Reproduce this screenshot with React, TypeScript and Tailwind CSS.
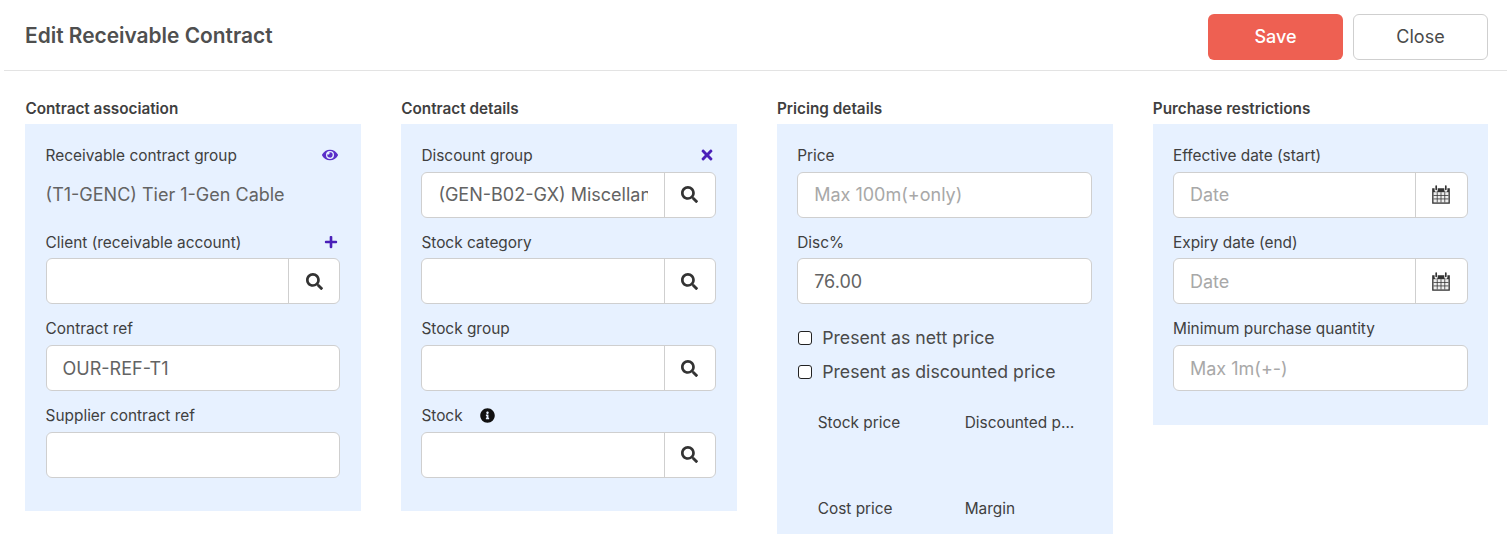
import React from "react";
import { FaEye, FaPlus, FaTimes, FaSearch, FaInfoCircle } from "react-icons/fa";

function CalendarIcon() {
  return (
    <svg width="18" height="19" viewBox="1 0.5 16 17.2" className="text-[#333]">
      <path fill="currentColor" d="M1 3.5h2.2V5.2a1.4 1.4 0 0 0 2.8 0V3.5h6V5.2a1.4 1.4 0 0 0 2.8 0V3.5H17v14H1z" />
      <rect x="3.9" y="0.8" width="1.5" height="4.4" rx="0.7" fill="currentColor" />
      <rect x="12.6" y="0.8" width="1.5" height="4.4" rx="0.7" fill="currentColor" />
      <path fill="#eee" d="M2.2 7h13.6v9.3H2.2z" />
      <path stroke="currentColor" strokeWidth="0.7" fill="none" d="M2.2 10h13.6M2.2 13.1h13.6M5.6 7v9.3M9 7v9.3M12.4 7v9.3" />
    </svg>
  );
}

function Label({ children, right }: { children: React.ReactNode; right?: React.ReactNode }) {
  return (
    <div className="flex h-[24px] items-center justify-between text-[15.4px] text-[#404040]">
      <span className="flex items-center">{children}</span>
      {right}
    </div>
  );
}

function Field({ label, right, children }: { label: React.ReactNode; right?: React.ReactNode; children: React.ReactNode }) {
  return (
    <div className="h-[86.67px]">
      <Label right={right}>{label}</Label>
      <div className="mt-[4px]">{children}</div>
    </div>
  );
}

function TextBox({ value, placeholder }: { value?: string; placeholder?: string }) {
  return (
    <div className="flex h-[46px] items-center rounded-md border border-[#cfcfcf] bg-white px-4 text-[18px]">
      {value ? <span className="text-[#636363]">{value}</span> : <span className="text-[#a8a8a8]">{placeholder}</span>}
    </div>
  );
}

function AddonBox({ value, placeholder, icon }: { value?: string; placeholder?: string; icon: React.ReactNode }) {
  return (
    <div className="flex h-[46px] rounded-md border border-[#cfcfcf] bg-white text-[18px]">
      <div className="flex min-w-0 flex-1 items-center overflow-hidden whitespace-nowrap pl-4 pr-4">
        {value && <span className="block w-full overflow-hidden text-[#636363]">{value}</span>}
        {placeholder && <span className="text-[#a8a8a8]">{placeholder}</span>}
      </div>
      <div className="flex w-[51.5px] shrink-0 items-center justify-center border-l border-[#cfcfcf]">{icon}</div>
    </div>
  );
}

const Search = <FaSearch className="text-[17px] text-[#333]" />;

function Column({ title, children, className }: { title: string; children: React.ReactNode; className: string }) {
  return (
    <section className="min-w-0">
      <h2 className="mb-[2px] flex h-[26px] items-center text-[15.3px] font-semibold text-[#3f3f3f]">{title}</h2>
      <div className={"bg-[#e7f1ff] pl-[20.2px] pr-[20.6px] pt-[19.7px] " + className}>{children}</div>
    </section>
  );
}

function Check({ label }: { label: string }) {
  return (
    <label className="flex h-[34px] items-center text-[17.7px] text-[#4a4a4a]">
      <span className="ml-[0.5px] mr-[10.5px] h-[14px] w-[14px] rounded-[3px] border-[1.5px] border-[#222] bg-white" />
      {label}
    </label>
  );
}

export default function App() {
  return (
    <div className="h-[534px] overflow-hidden bg-white font-['Inter',sans-serif]">
      <header className="ml-1 flex h-[71px] items-center justify-between border-b border-[#e3e3e3] pl-[21px] pr-[19px] pt-[4px]">
        <h1 className="-mt-[2px] text-[20.9px] font-semibold text-[#4f4f4f]">Edit Receivable Contract</h1>
        <div className="flex gap-[10px]">
          <button className="h-[46px] w-[135px] rounded-md bg-[#ee6052] pb-[2px] text-[18px] font-medium text-white">Save</button>
          <button className="h-[46px] w-[135px] rounded-md border border-[#cfcfcf] bg-white pb-[2px] text-[18px] text-[#4a4a4a]">Close</button>
        </div>
      </header>
      <main className="grid grid-cols-4 gap-x-[40.3px] pl-[25.4px] pr-[18.7px] pt-[25px]">
        <Column title="Contract association" className="h-[387px]">
          <Field label="Receivable contract group" right={<FaEye className="mr-[2px] -translate-y-px text-[16px] text-[#5b2fc9]" />}>
            <div className="flex h-[46px] items-center text-[18px] text-[#636363]">(T1-GENC) Tier 1-Gen Cable</div>
          </Field>
          <Field label="Client (receivable account)" right={<FaPlus className="mr-[2px] text-[14px] text-[#4a1fb8]" />}>
            <AddonBox icon={Search} />
          </Field>
          <Field label="Contract ref">
            <TextBox value="OUR-REF-T1" />
          </Field>
          <Field label="Supplier contract ref">
            <TextBox />
          </Field>
        </Column>
        <Column title="Contract details" className="h-[387px]">
          <Field label="Discount group" right={<FaTimes className="mr-[1.5px] -translate-y-px text-[16px] text-[#4a1fb8]" />}>
            <AddonBox value="(GEN-B02-GX) Miscellaneous" icon={Search} />
          </Field>
          <Field label="Stock category">
            <AddonBox icon={Search} />
          </Field>
          <Field label="Stock group">
            <AddonBox icon={Search} />
          </Field>
          <Field label={<>Stock<FaInfoCircle className="ml-[17px] text-[15px] text-[#111]" /></>}>
            <AddonBox icon={Search} />
          </Field>
        </Column>
        <Column title="Pricing details" className="h-[410px]">
          <Field label="Price">
            <TextBox placeholder="Max 100m(+only)" />
          </Field>
          <Field label="Disc%">
            <TextBox value="76.00" />
          </Field>
          <div className="mt-[4px]">
            <Check label="Present as nett price" />
            <Check label="Present as discounted price" />
          </div>
          <div className="mt-[22px] grid grid-cols-[147px_111px] pl-[20.5px] text-[15.4px] text-[#404040]">
            <div className="h-[86px] truncate">Stock price</div>
            <div className="h-[86px] truncate">Discounted price</div>
            <div className="truncate">Cost price</div>
            <div className="truncate">Margin</div>
          </div>
        </Column>
        <Column title="Purchase restrictions" className="h-[301px]">
          <Field label="Effective date (start)">
            <AddonBox placeholder="Date" icon={<CalendarIcon />} />
          </Field>
          <Field label="Expiry date (end)">
            <AddonBox placeholder="Date" icon={<CalendarIcon />} />
          </Field>
          <Field label="Minimum purchase quantity">
            <TextBox placeholder="Max 1m(+-)" />
          </Field>
        </Column>
      </main>
    </div>
  );
}
